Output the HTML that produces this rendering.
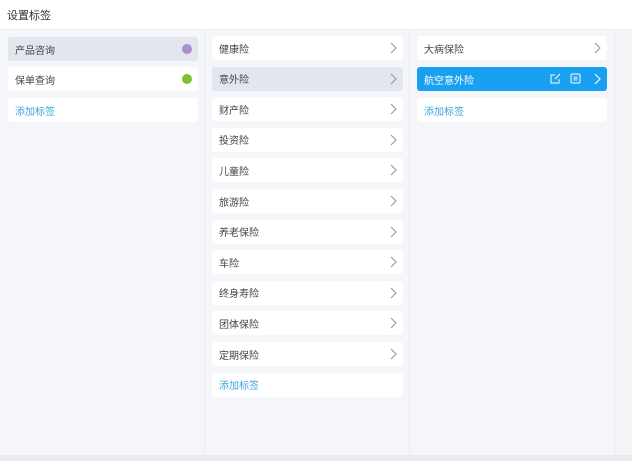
<!DOCTYPE html><html><head><meta charset="utf-8"><style>
*{margin:0;padding:0;box-sizing:border-box}
body{width:632px;height:461px;background:#f4f5f9;font-family:"Liberation Sans","Noto Sans CJK SC",sans-serif;font-size:10px;color:#444;position:relative;overflow:hidden}
.hd{position:absolute;left:0;top:0;width:632px;height:30px;background:#fff;border-bottom:1px solid #eceef3}
.hd span{position:absolute;left:7px;top:0;height:30px;display:flex;align-items:center;font-size:11px;color:#333}
.col{position:absolute;top:30px;height:425px;background:#f5f6fa;border-right:1px solid #e9ebf0}
.it{position:absolute;height:24px;background:#fff;border-radius:3px;display:flex;align-items:center;padding-left:7px}
.sel{background:#e3e6ef}
.act{background:#1aa0f0;color:#fff}
.add{color:#3ba7dd}
.dot{position:absolute;right:6px;top:7px;width:10px;height:10px;border-radius:50%}
.ch{position:absolute;right:5px;top:6px;width:10px;height:12px}
.bot{position:absolute;left:0;top:455px;width:632px;height:6px;background:#e8eaf0}
</style></head><body>
<div class="hd"><span>设置标签</span></div>
<div class="col" style="left:0;width:205px"></div>
<div class="col" style="left:205px;width:205px"></div>
<div class="col" style="left:410px;width:205px"></div>
<div class="bot"></div>

<div class="it sel" style="left:8px;top:37px;width:190px">产品咨询<i class="dot" style="background:#a98fcb"></i></div>
<div class="it" style="left:8px;top:67px;width:190px">保单查询<i class="dot" style="background:#7ec12c"></i></div>
<div class="it add" style="left:8px;top:98px;width:190px">添加标签</div>

<div id="c2"></div>
<div class="it" style="left:417px;top:36px;width:190px">大病保险<svg class="ch" viewBox="0 0 10 12"><path d="M3 1l5 5-5 5" fill="none" stroke="#999" stroke-width="1.1"/></svg></div>
<div class="it act" style="left:417px;top:67px;width:190px">航空意外险
<svg style="position:absolute;left:133px;top:6px" width="11" height="11" viewBox="0 0 11 11"><path d="M9 6v4H1V2h4M5 6l5-5" fill="none" stroke="#fff" stroke-width="1"/></svg>
<svg style="position:absolute;left:153px;top:6px" width="11" height="11" viewBox="0 0 11 11"><rect x="1" y="1" width="9" height="9" rx="1.5" fill="none" stroke="#fff"/><path d="M3.5 4h4M3.5 5.5h4M3.5 7h4" stroke="#fff" stroke-width=".8"/></svg>
<svg class="ch" viewBox="0 0 10 12"><path d="M3 1l5 5-5 5" fill="none" stroke="#fff" stroke-width="1.1"/></svg></div>
<div class="it add" style="left:417px;top:98px;width:190px">添加标签</div>
<script>
var n=["健康险","意外险","财产险","投资险","儿童险","旅游险","养老保险","车险","终身寿险","团体保险","定期保险"],h="";
n.forEach(function(t,i){h+='<div class="it'+(i==1?' sel':'')+'" style="left:212px;top:'+(36+i*30.6)+'px;width:191px">'+t+'<svg class="ch" viewBox="0 0 10 12"><path d="M3 1l5 5-5 5" fill="none" stroke="#999" stroke-width="1.1"/></svg></div>'});
h+='<div class="it add" style="left:212px;top:'+(36+11*30.6)+'px;width:191px">添加标签</div>';
document.getElementById("c2").innerHTML=h;
</script>
</body></html>
